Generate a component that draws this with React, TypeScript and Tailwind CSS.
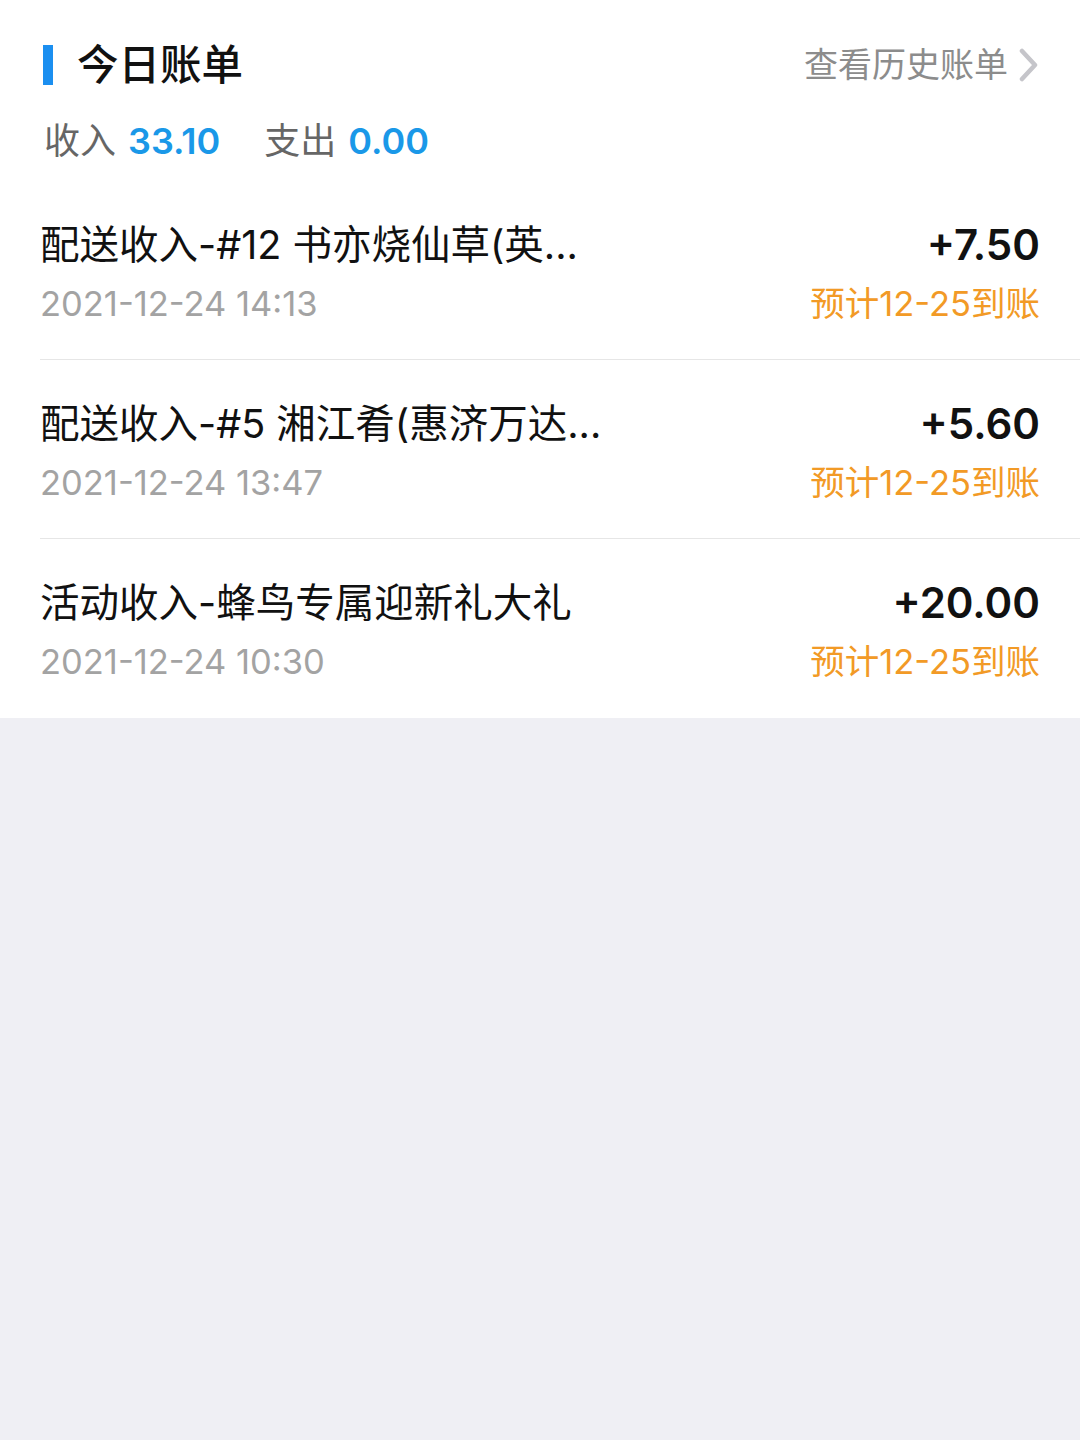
import React from "react";

const bills = [
  { title: "配送收入-#12 书亦烧仙草(英...", time: "2021-12-24 14:13", amount: "+7.50" },
  { title: "配送收入-#5 湘江肴(惠济万达...", time: "2021-12-24 13:47", amount: "+5.60" },
  { title: "活动收入-蜂鸟专属迎新礼大礼", time: "2021-12-24 10:30", amount: "+20.00" },
];

export default function App() {
  return (
    <div
      className="min-h-screen bg-[#efeff4]"
      style={{ fontFamily: 'Inter, "Noto Sans CJK SC", sans-serif' }}
    >
      <div className="bg-white">
        {/* 标题 */}
        <div className="flex items-center justify-between pt-[40px] pl-[43px] pr-[40px] h-[90px]">
          <div className="flex items-center h-[50px]">
            <div className="w-[10px] h-[40px] bg-[#1b8ff0]" />
            <div className="ml-[24px] text-[41.5px] leading-[50px] font-medium text-[#111]">今日账单</div>
          </div>
          <div className="flex items-center h-[50px]">
            <span className="text-[34px] leading-[50px] text-[#8c8c8c]">查看历史账单</span>
            <svg className="ml-[10px]" width="22" height="34" viewBox="0 0 22 34">
              <polyline points="4,3 17,17 4,31" fill="none" stroke="#c5c5ca" strokeWidth="4.5" strokeLinecap="round" strokeLinejoin="round" />
            </svg>
          </div>
        </div>

        {/* 汇总 */}
        <div className="flex items-center h-[50px] mt-[26px] pl-[44px] text-[36px] leading-[50px]">
          <span className="text-[#666]">收入</span>
          <span className="ml-[12px] font-semibold text-[#1a98e8]">33.10</span>
          <span className="ml-[44px] text-[#666]">支出</span>
          <span className="ml-[12px] font-semibold text-[#1a98e8]">0.00</span>
        </div>

        {/* 列表 */}
        <div className="pl-[40px] mt-[15px]">
          {bills.map((b, i) => (
            <div
              key={i}
              className={
                "flex justify-between pr-[40px] h-[179px] pt-[39px] " +
                (i < bills.length - 1 ? "border-b border-[#e6e6e6]" : "")
              }
            >
              <div className="flex flex-col">
                <div className="text-[39.5px] leading-[50px] text-[#111] whitespace-nowrap">{b.title}</div>
                <div className="mt-[9px] text-[34.5px] leading-[50px] text-[#a3a3a3]">{b.time}</div>
              </div>
              <div className="flex flex-col items-end">
                <div className="text-[42px] leading-[50px] font-semibold text-[#111]">{b.amount}</div>
                <div className="mt-[9px] text-[34.5px] leading-[50px] text-[#f29a26]">预计12-25到账</div>
              </div>
            </div>
          ))}
        </div>
      </div>
    </div>
  );
}
